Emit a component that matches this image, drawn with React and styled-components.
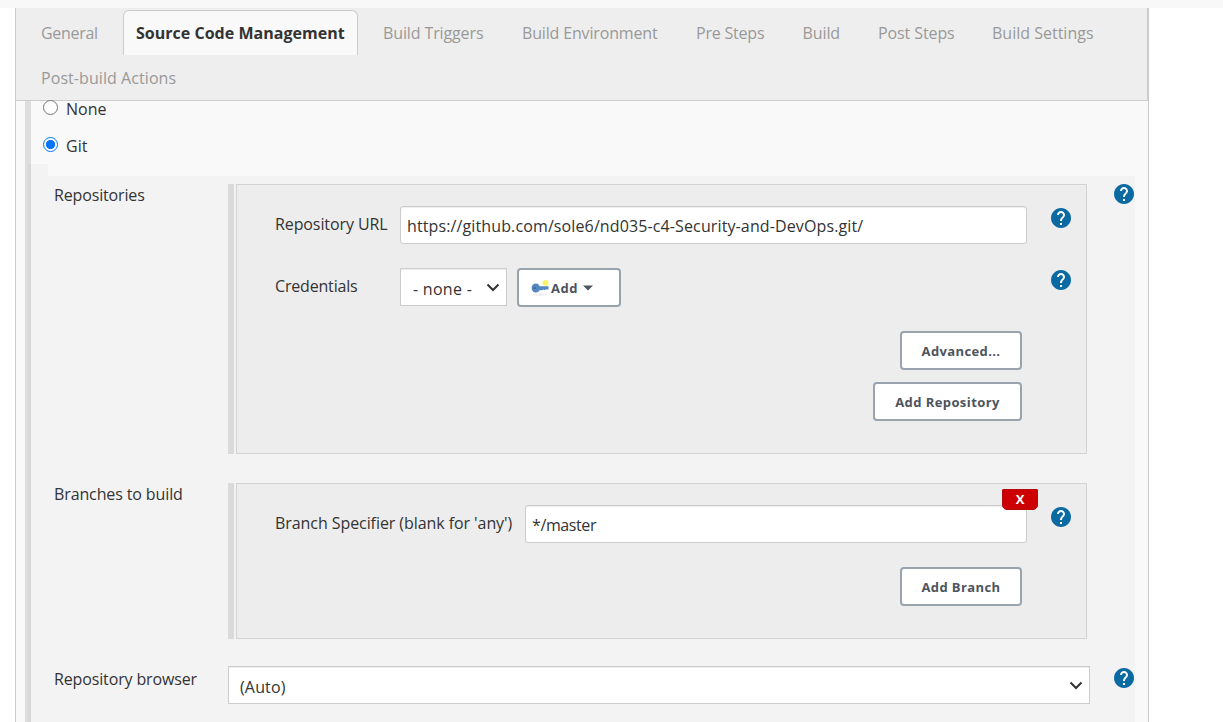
import React from "react";
import styled, { createGlobalStyle } from "styled-components";

const Global = createGlobalStyle`
  *, *::before, *::after { box-sizing: border-box; }
  html, body { margin: 0; height: 722px; overflow: hidden; background: #fff; }
  body, button, input { font-family: "Open Sans", "Noto Sans", sans-serif; }
`;

const Page = styled.div`
  height: 722px;
  overflow: hidden;
  display: flex;
  flex-direction: column;
  color: #333;
  font-size: 16px;
`;

const TopStrip = styled.div`
  flex: none;
  height: 8px;
  background: #f8f8f8;
`;

const Panel = styled.main`
  flex: 1;
  width: 1134px;
  margin-left: 15px;
  border: solid #ccc;
  border-width: 0 1px;
  background: #f9f9f9;
`;

const TabBar = styled.nav`
  display: flex;
  flex-wrap: wrap;
  align-content: flex-start;
  height: 93px;
  padding: 2px 0 0 12px;
  background: #eee;
  border: solid #ccc;
  border-width: 0 1px 1px 0;
`;

const Tab = styled.a`
  flex: none;
  width: ${(p) => p.$w}px;
  height: 45px;
  padding: 0 12px;
  border: solid transparent;
  border-width: 1px 1px 0;
  border-radius: 6px 6px 0 0;
  line-height: 44px;
  white-space: nowrap;
  color: #999;
  letter-spacing: ${(p) => p.$ls || 0}px;
  ${(p) =>
    p.$active &&
    `
    color: #333;
    font-weight: 700;
    border-color: #ccc;
    background: #f9f9f9;
  `}
`;

const Text = styled.span`
  white-space: nowrap;
  letter-spacing: ${(p) => p.$ls || 0}px;
`;

const Section = styled.section`
  margin-left: 9px;
  border-left: 6px solid #dedede;
  height: 621px;
`;

const Choices = styled.div`
  height: 75px;
  padding-left: 12px;
`;

const Choice = styled.label`
  display: flex;
  height: 37px;
  gap: 8px;
`;

const Radio = styled.span`
  flex: none;
  width: 15px;
  height: 15px;
  margin-top: -1px;
  border-radius: 50%;
  border: 1px solid ${(p) => (p.$on ? "#0075ff" : "#767676")};
  background: ${(p) => (p.$on ? "radial-gradient(circle, #0075ff 4.2px, #fff 4.9px)" : "#fff")};
`;

const ChoiceText = styled(Text)`
  line-height: 22px;
  margin-top: -3px;
`;

const Nested = styled.div`
  margin-left: -3px;
  border-left: 3px solid #d8d8d8;
  height: 558px;
  margin-top: -12px;
`;

const NestedLip = styled.div`
  width: 17px;
  height: 12px;
  background: #f3f3f3;
`;

const Settings = styled.div`
  width: 1104px;
  height: 546px;
  padding-top: 8px;
  background: #f3f3f3;
  display: flex;
  flex-direction: column;
`;

const Setting = styled.div`
  display: flex;
  height: ${(p) => p.$h}px;
  align-items: flex-start;
`;

const SettingLabel = styled(Text)`
  flex: none;
  width: 197px;
  padding-left: 23px;
  padding-top: ${(p) => p.$top || 0}px;
  line-height: 22px;
`;

const Group = styled.div`
  flex: none;
  width: 859px;
  height: ${(p) => p.$h}px;
  padding-left: 2px;
  border-left: 6px solid #dadada;
`;

const GroupBody = styled.div`
  height: 100%;
  padding: 21px 0 0 38px;
  border: 1px solid #d3d3d3;
  background: #ededed;
`;

const Field = styled.div`
  display: flex;
  align-items: flex-start;
  height: 62px;
`;

const FieldLabel = styled(Text)`
  flex: none;
  width: ${(p) => p.$w}px;
  margin-top: 7px;
  line-height: 22px;
`;

const Input = styled.div`
  position: relative;
  flex: none;
  width: ${(p) => p.$w}px;
  height: 38px;
  padding: 0 6px;
  border: 1px solid #ccc;
  border-radius: 3px;
  background: #fff;
  box-shadow: inset 0 1px 1px rgba(0, 0, 0, 0.075);
  line-height: 38px;
`;

const Select = styled.div`
  flex: none;
  display: flex;
  align-items: center;
  justify-content: space-between;
  width: ${(p) => p.$w}px;
  height: 38px;
  padding: 3px 6px 0 ${(p) => p.$pl || 11}px;
  border: 1px solid #ccc;
  background: #fff;
  box-shadow: inset 0 1px 1px rgba(0, 0, 0, 0.075);
  svg { margin-top: -3px; }
`;

const Button = styled.button`
  flex: none;
  display: flex;
  align-items: center;
  justify-content: ${(p) => (p.$left ? "flex-start" : "center")};
  width: ${(p) => p.$w}px;
  height: 39px;
  padding: ${(p) => (p.$left ? "0 0 0 12px" : "0")};
  border: 2px solid #98a3ad;
  border-radius: 4px;
  background: #fff;
  color: #4d545d;
  font-size: 13px;
  font-weight: 700;
`;

const Actions = styled.div`
  display: flex;
  flex-direction: column;
  align-items: flex-end;
  gap: 12px;
  width: 747px;
  padding-top: ${(p) => p.$top || 0}px;
`;

const HelpSlot = styled.span`
  flex: none;
  display: flex;
  margin: ${(p) => p.$m};
`;

const MenuSlot = styled.span`
  flex: none;
  margin-left: 10px;
`;

const DeleteButton = styled.button`
  position: absolute;
  top: -17px;
  right: -12px;
  width: 36px;
  height: 21px;
  padding: 0;
  border: 1px solid #b80d0d;
  border-radius: 1px 1px 5px 5px;
  background: #c00;
  color: #fff;
  font-size: 13px;
  line-height: 19px;
  font-weight: 700;
`;

function Help({ m }) {
  return (
    <HelpSlot $m={m}>
      <svg width="20" height="20" viewBox="2 2 20 20">
        <path
          fill="#0b6aa2"
          d="M12 2C6.48 2 2 6.48 2 12s4.480 10 10 10 10-4.480 10-10S17.520 2 12 2z"
        />
        <path
          fill="#fff"
          d="M11 19h2v-2h-2zM12 5c-2.210 0-4 1.790-4 4h2c0-1.100.9-2 2-2s2 .9 2 2c0 .55-.22 1.050-.59 1.410l-1.240 1.260C11.450 12.400 11 13.400 11 14.500v.5h2c0-1.500.45-2.100 1.170-2.830l.9-.92C15.640 10.680 16 9.880 16 9c0-2.210-1.790-4-4-4z"
        />
      </svg>
    </HelpSlot>
  );
}

function Chevron() {
  return (
    <svg width="14" height="9" viewBox="0 0 14 9" fill="none">
      <path d="M1.500 1.500L7 7l5.500-5.500" stroke="#333" strokeWidth="2" />
    </svg>
  );
}

function KeyIcon() {
  return (
    <svg width="19" height="18" viewBox="0 0 19 18">
      <ellipse cx="9" cy="15.500" rx="7" ry="1.500" fill="#f0f0f0" />
      <circle cx="14.500" cy="4" r="3" fill="#fbf36b" />
      <ellipse cx="4.800" cy="9" rx="4.200" ry="4.500" fill="#5687c0" />
      <path d="M7 7.300h10.500v3.200h-3l-1 .8-1-.8-1.200.8H7z" fill="#5687c0" />
      <circle cx="3.700" cy="9" r="1.300" fill="#416c9f" />
    </svg>
  );
}

const CaretIcon = styled.svg`
  margin-left: 5px;
`;

function Caret() {
  return (
    <CaretIcon width="10" height="6" viewBox="0 0 10 6">
      <path d="M0 .5h10L5 5.500z" fill="#4d545d" />
    </CaretIcon>
  );
}

const ButtonText = styled(Text)`
  margin-left: ${(p) => p.$ml || 0}px;
`;

const tabs = [
  { label: "General", w: 95, ls: -0.3 },
  { label: "Source Code Management", w: 235, active: true, ls: 0.02 },
  { label: "Build Triggers", w: 139, pad: true, ls: -0.12 },
  { label: "Build Environment", w: 174, ls: -0.16 },
  { label: "Pre Steps", w: 106.5, ls: -0.2 },
  { label: "Build", w: 75.5, ls: -0.1 },
  { label: "Post Steps", w: 114, ls: -0.1 },
  { label: "Build Settings", w: 127 },
  { label: "Post-build Actions", w: 160, ls: 0.07 },
];

const TabGap = styled.span`
  flex: none;
  width: 12px;
`;

export default function App() {
  return (
    <Page>
      <Global />
      <TopStrip />
      <Panel>
        <TabBar>
          {tabs.map((t) => (
            <React.Fragment key={t.label}>
              {t.pad && <TabGap />}
              <Tab $w={t.w} $active={t.active} $ls={t.ls}>
                {t.label}
              </Tab>
            </React.Fragment>
          ))}
        </TabBar>
        <Section>
          <Choices>
            <Choice>
              <Radio />
              <ChoiceText>None</ChoiceText>
            </Choice>
            <Choice>
              <Radio $on />
              <ChoiceText>Git</ChoiceText>
            </Choice>
          </Choices>
          <Nested>
            <NestedLip />
            <Settings>
              <Setting $h={299}>
                <SettingLabel $ls={-0.15}>Repositories</SettingLabel>
                <Group $h={270}>
                  <GroupBody>
                    <Field>
                      <FieldLabel $w={125} $ls={-0.1}>Repository URL</FieldLabel>
                      <Input $w={627}>
                        <Text $ls={0.12}>https://github.com/sole6/nd035-c4-Security-and-DevOps.git/</Text>
                      </Input>
                      <Help m="2px 0 0 24px" />
                    </Field>
                    <Field>
                      <FieldLabel $w={125} $ls={-0.18}>Credentials</FieldLabel>
                      <Select $w={107} $pl={12}>
                        <Text $ls={0.28}>- none -</Text>
                        <Chevron />
                      </Select>
                      <MenuSlot>
                        <Button $w={104} $left>
                          <KeyIcon />
                          <ButtonText $ls={0.5} $ml={1}>Add</ButtonText>
                          <Caret />
                        </Button>
                      </MenuSlot>
                      <Help m="2px 0 0 430px" />
                    </Field>
                    <Actions $top={1}>
                      <Button $w={122}><Text $ls={0.38}>Advanced...</Text></Button>
                      <Button $w={149}><Text $ls={0.42}>Add Repository</Text></Button>
                    </Actions>
                  </GroupBody>
                </Group>
                <Help m="0 0 0 27px" />
              </Setting>
              <Setting $h={183}>
                <SettingLabel $ls={-0.12}>Branches to build</SettingLabel>
                <Group $h={156}>
                  <GroupBody>
                    <Field>
                      <FieldLabel $w={250} $ls={-0.07}>Branch Specifier (blank for 'any')</FieldLabel>
                      <Input $w={502}>
                        <Text $ls={-0.4}>*/master</Text>
                        <DeleteButton>X</DeleteButton>
                      </Input>
                      <Help m="2px 0 0 24px" />
                    </Field>
                    <Actions>
                      <Button $w={122}><Text $ls={0.4}>Add Branch</Text></Button>
                    </Actions>
                  </GroupBody>
                </Group>
              </Setting>
              <Setting $h={56}>
                <SettingLabel $top={2} $ls={-0.14}>Repository browser</SettingLabel>
                <Select $w={862}>
                  <Text $ls={0.15}>(Auto)</Text>
                  <Chevron />
                </Select>
                <Help m="2px 0 0 24px" />
              </Setting>
            </Settings>
          </Nested>
        </Section>
      </Panel>
    </Page>
  );
}
